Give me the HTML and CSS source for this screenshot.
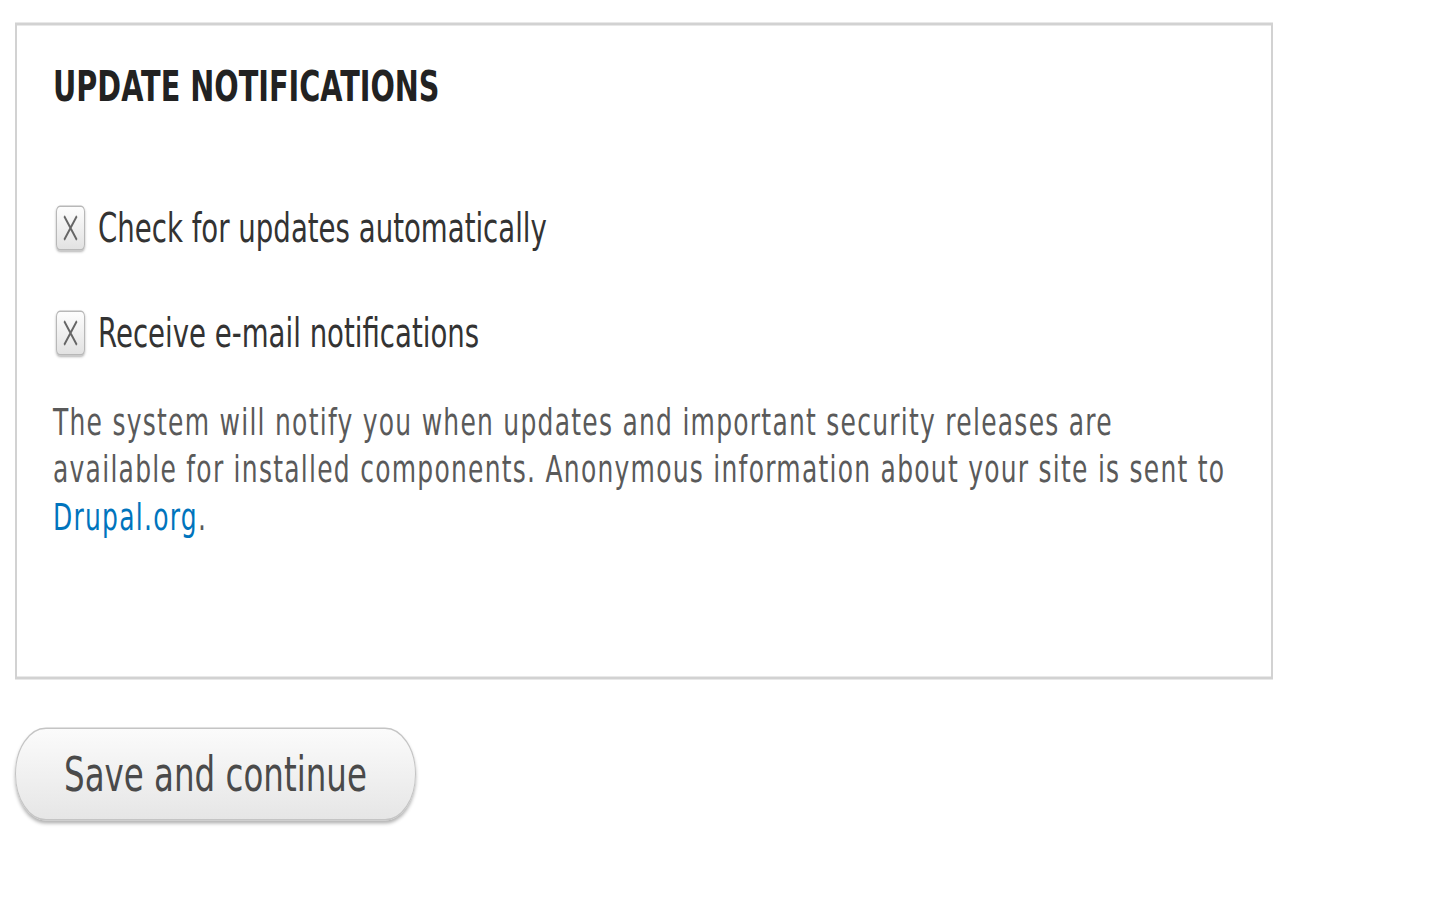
FILE: index.html
```html
<!DOCTYPE html>
<html lang="en">
<head>
  <meta charset="UTF-8">
  <title>Update notifications</title>
  <link rel="stylesheet" href="styles.css">
</head>
<body>
  <div class="page">
    <fieldset class="box">
      <h2>UPDATE NOTIFICATIONS</h2>

      <label class="option">
        <span class="check">
          <svg viewBox="0 0 16 19"><path d="M2 2 L14 17 M14 2 L2 17" stroke="#666" stroke-width="1.6" fill="none"/></svg>
        </span>
        Check for updates automatically
      </label>

      <label class="option">
        <span class="check">
          <svg viewBox="0 0 16 19"><path d="M2 2 L14 17 M14 2 L2 17" stroke="#666" stroke-width="1.6" fill="none"/></svg>
        </span>
        Receive e-mail notifications
      </label>

      <p class="description">
        The system will notify you when updates and important security releases are<br>
        available for installed components. Anonymous information about your site is sent to<br>
        <a href="#">Drupal.org</a>.
      </p>
    </fieldset>

    <button class="button">Save and continue</button>
  </div>
</body>
</html>
```

FILE: styles.css
```css
html, body {
  min-height: 900px;
}

body {
  margin: 0;
  padding: 0;
  background: #fff;
  font-family: "DejaVu Sans", Verdana, sans-serif;
  color: #333;
}

/* the whole form is shown stretched to 1.5x in height */
.page {
  box-sizing: border-box;
  height: 600px;
  padding: 15px 0 0 15px;
  transform: scaleY(1.5);
  transform-origin: 0 0;
}

.box {
  box-sizing: border-box;
  width: 1258px;
  height: 438px;
  margin: 0;
  padding: 23px 36px 0;
  border: 2px solid #d2d2d2;
}

h2 {
  margin: 0;
  font-size: 28.7px;
  line-height: 34px;
  font-weight: bold;
  color: #222;
}

.option {
  display: flex;
  align-items: center;
  gap: 13px;
  margin-top: 38px;
  font-size: 27.6px;
  line-height: 32px;
  color: #333;
}

h2 + .option {
  margin-top: 62px;
}

.check {
  display: flex;
  align-items: center;
  justify-content: center;
  box-sizing: border-box;
  width: 29px;
  height: 30px;
  margin-left: 3px;
  border: 1px solid #b8b8b8;
  border-radius: 4px;
  background: linear-gradient(#fdfdfd, #e2e2e2);
  box-shadow: 0 1px 2px rgba(0, 0, 0, 0.3);
}

.check svg {
  width: 17px;
  height: 20px;
}

.description {
  margin: 28px 0 0;
  font-size: 25px;
  letter-spacing: 1.25px;
  line-height: 31.3px;
  color: #5a5a5a;
}

.description a {
  color: #0074bd;
  text-decoration: none;
}

.button {
  display: block;
  box-sizing: border-box;
  height: 62px;
  margin-top: 32px;
  padding: 0 48px;
  font-family: "DejaVu Sans", Verdana, sans-serif;
  font-size: 32.5px;
  color: #4a4a4a;
  background: linear-gradient(#fbfbfb, #e6e6e6);
  border: 1px solid #c4c4c4;
  border-radius: 31px;
  box-shadow: 0 2px 3px rgba(0, 0, 0, 0.3);
  cursor: pointer;
}
```
